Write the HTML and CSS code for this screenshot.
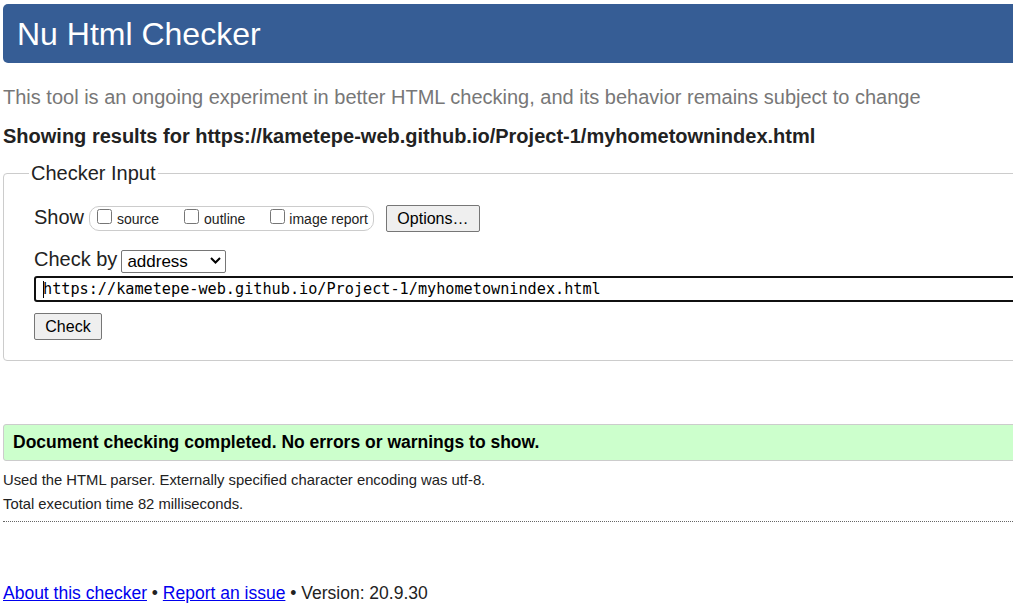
FILE: index.html
```html
<!DOCTYPE html>
<html>
<head>
<meta charset="utf-8">
<title>Nu Html Checker</title>
<link rel="stylesheet" href="styles.css">
</head>
<body>
<div class="page">
  <h1 class="banner">Nu Html Checker</h1>
  <p class="intro">This tool is an ongoing experiment in better HTML checking, and its behavior remains subject to change</p>
  <p class="showing">Showing results for https://kametepe-web.github.io/Project-1/myhometownindex.html</p>
  <fieldset class="checker">
    <legend>Checker Input</legend>
    <div class="row show-row">
      <span class="lbl">Show</span>
      <span class="opts">
        <label class="opt"><input type="checkbox"><span>source</span></label>
        <label class="opt"><input type="checkbox"><span>outline</span></label>
        <label class="opt"><input type="checkbox"><span>image report</span></label>
      </span>
      <button class="btn options">Options…</button>
    </div>
    <div class="row by-row">
      <span class="lbl">Check by</span>
      <span class="sel-wrap">
        <select class="sel"><option>address</option></select>
        <svg class="chev" width="11" height="7" viewBox="0 0 11 7"><path d="M1 1 L5.5 5.5 L10 1" fill="none" stroke="#000" stroke-width="2"/></svg>
      </span>
    </div>
    <div class="url"><span class="caret"></span>https://kametepe-web.github.io/Project-1/myhometownindex.html</div>
    <button class="btn check">Check</button>
  </fieldset>
  <p class="success">Document checking completed. No errors or warnings to show.</p>
  <p class="details">Used the HTML parser. Externally specified character encoding was utf-8.</p>
  <p class="details">Total execution time 82 milliseconds.</p>
  <hr class="sep">
  <p class="footer"><a href="#">About this checker</a> • <a href="#">Report an issue</a> • Version: 20.9.30</p>
</div>
</body>
</html>
```
FILE: styles.css
```css
html, body {
  margin: 0;
  padding: 0;
  overflow: hidden;
  background: #fff;
}
body {
  font-family: "Liberation Sans", Arial, sans-serif;
  color: #222;
}
.page {
  width: 1040px;
  padding: 4px 0 0 3px;
}
.banner {
  margin: 0;
  height: 59px;
  box-sizing: border-box;
  padding: 0 14px;
  background: #365d95;
  color: #fff;
  font-weight: normal;
  font-size: 32px;
  line-height: 60px;
  border-radius: 5px;
}
.intro {
  margin: 22px 0 0;
  font-size: 20px;
  line-height: 24px;
  color: #777;
}
.showing {
  margin: 16px 0 0;
  font-size: 20px;
  line-height: 22px;
  font-weight: bold;
  color: #222;
}
.checker {
  margin: 15px 0 0;
  padding: 17px 0 20px 30px;
  border: 1px solid #ccc;
  border-radius: 4px;
}
.checker legend {
  font-size: 20px;
  padding: 0 2px;
  margin-left: -5px;
  color: #222;
}
.row {
  display: flex;
  align-items: center;
  font-size: 20px;
}
.show-row {
  height: 30px;
}
.lbl {
  margin-right: 4px;
}
.opts {
  display: inline-flex;
  align-items: center;
  border: 1px solid #ccc;
  border-radius: 10px;
  height: 23px;
  padding: 0 5px 0 7px;
  margin-left: 1px;
  margin-top: 3px;
}
.opt {
  display: inline-flex;
  align-items: center;
  font-size: 14px;
  margin-right: 25px;
}
.opt:last-child {
  margin-right: 0;
}
.opt input {
  margin: 0 5px 0 0;
  width: 15px;
  height: 15px;
  position: relative;
  top: -2px;
}
.opt:last-child input {
  margin-right: 4px;
}
.btn {
  font-family: "Liberation Sans", Arial, sans-serif;
  font-size: 16px;
  color: #000;
  background: #efefef;
  border: 1px solid #767676;
  border-radius: 2px;
  padding: 0 9px;
  height: 27px;
}
.options {
  margin-left: 12px;
  margin-top: 3px;
  width: 94px;
}
.by-row {
  margin-top: 14px;
  height: 26px;
}
.sel-wrap {
  position: relative;
  display: inline-block;
  height: 23px;
  margin-top: 2px;
}
.sel {
  -webkit-appearance: none;
  appearance: none;
  font-family: "Liberation Sans", Arial, sans-serif;
  font-size: 17px;
  height: 23px;
  width: 105px;
  border: 1px solid #767676;
  border-radius: 2px;
  background: #fff;
  color: #000;
  padding: 0 0 0 5px;
  line-height: 21px;
}
.chev {
  position: absolute;
  left: 89px;
  top: 8px;
  pointer-events: none;
}
.url {
  margin-top: 4px;
  width: 1000px;
  height: 26px;
  box-sizing: border-box;
  border: 2px solid #101010;
  border-radius: 3px;
  padding: 0 0 0 7px;
  font-family: "DejaVu Sans Mono", "Liberation Mono", monospace;
  font-size: 15.2px;
  line-height: 22px;
  color: #000;
  white-space: nowrap;
  position: relative;
}
.caret {
  position: absolute;
  left: 7px;
  top: 3px;
  width: 1px;
  height: 17px;
  background: #000;
}
.check {
  display: block;
  margin-top: 11px;
  width: 68px;
}
.success {
  margin: 63px 0 0;
  height: 37px;
  box-sizing: border-box;
  background: #ccffcc;
  border: 1px solid #ccc;
  border-radius: 3px;
  padding: 0 9px;
  font-size: 17.5px;
  font-weight: bold;
  line-height: 35px;
  color: #000;
}
.details {
  margin: 0;
  font-size: 14.8px;
  line-height: 24px;
  color: #222;
}
.success + .details {
  margin-top: 7px;
}
.sep {
  margin: 5px 0 0;
  border: 0;
  border-top: 1px dotted #666;
  height: 0;
}
.footer {
  margin: 61px 0 0;
  font-size: 17.5px;
  color: #222;
}
.footer a {
  color: #0000ee;
}
```
